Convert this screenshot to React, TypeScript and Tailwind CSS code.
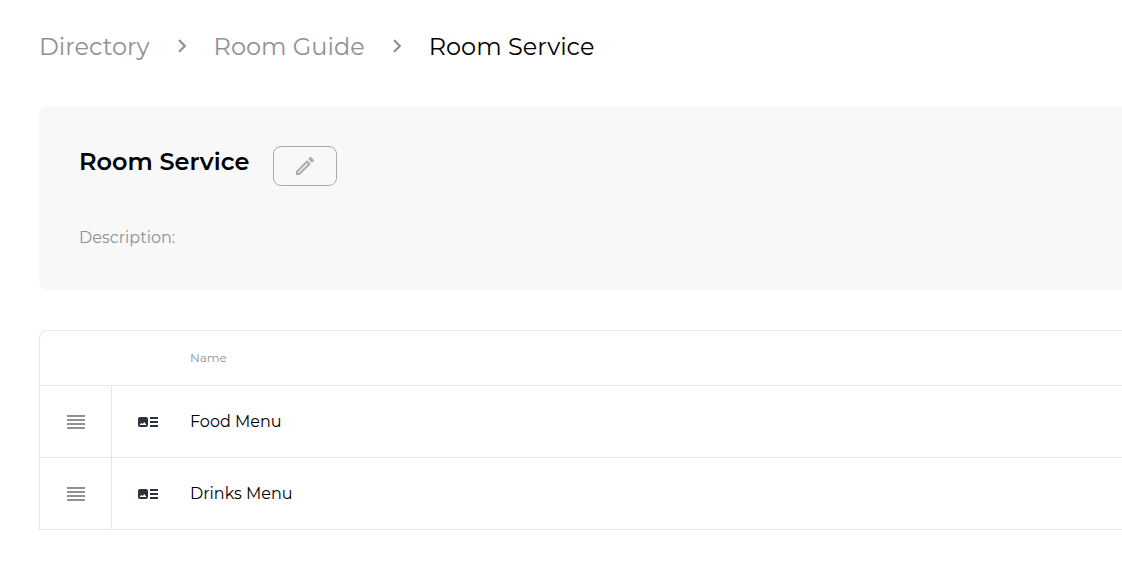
const items = [{ name: 'Food Menu' }, { name: 'Drinks Menu' }];

const Chevron = () => (
    <svg viewBox="1 2 22 22" className="w-6 h-6 shrink-0" fill="currentColor" aria-hidden="true">
        <path d="M10 6L8.59 7.41 13.17 12l-4.58 4.59L10 18l6-6z" />
    </svg>
);

const PencilIcon = () => (
    <svg viewBox="0 0 24 24" className="w-6 h-6" fill="currentColor" aria-hidden="true">
        <path d="M14.06 9.02l.92.92L5.92 19H5v-.92l9.06-9.06M17.66 3c-.25 0-.51.1-.7.29l-1.83 1.83 3.75 3.75 1.83-1.83c.39-.39.39-1.02 0-1.41l-2.34-2.34c-.2-.2-.45-.29-.71-.29zm-3.6 3.19L3 17.25V21h3.75L17.81 9.94l-3.75-3.75z" />
    </svg>
);

const DragIcon = () => (
    <svg viewBox="0 0 24 24" className="w-6 h-6 mx-auto" fill="currentColor" aria-hidden="true">
        <path d="M3 5h18v2H3zM3 9h18v2H3zM3 13h18v2H3zM3 17h18v2H3z" />
    </svg>
);

const ArticleIcon = () => (
    <svg viewBox="0 0 24 24" className="w-6 h-6 mx-auto" fill="currentColor" aria-hidden="true">
        <path d="M22 13h-8v-2h8v2zm0-6h-8v2h8V7zm-8 10h8v-2h-8v2zm-2-8v6c0 1.1-.9 2-2 2H4c-1.1 0-2-.9-2-2V9c0-1.1.9-2 2-2h6c1.1 0 2 .9 2 2zm-1.5 6l-2.25-3-1.75 2.26-1.25-1.51L3.5 15h7z" />
    </svg>
);

const App = () => {
    return (
        <div className="min-h-screen pt-7 pl-10 -ml-px overflow-hidden bg-white text-black font-[Montserrat,Inter,sans-serif]">
            {/* Breadcrumbs */}
            <nav className="flex items-center gap-5 text-2xl leading-[38px] text-[#8e9196]">
                <a href="/">Directory</a>
                <Chevron />
                <a href="/">Room Guide</a>
                <Chevron />
                <span className="text-black">Room Service</span>
            </nav>

            {/* Details */}
            <section className="p-10 mt-10 rounded-l-lg bg-[#f8f8f8]">
                <div className="flex items-start gap-6">
                    <h1 className="text-2xl font-semibold">Room Service</h1>
                    <button
                        aria-label="Edit"
                        className="flex items-center justify-center w-16 h-10 border border-[#a9abae] rounded-lg text-[#a9abae]"
                    >
                        <PencilIcon />
                    </button>
                </div>
                <p className="mt-10 leading-6 text-[#8e9196]">Description:</p>
            </section>

            {/* Items */}
            <table className="w-full mt-10 text-left border-separate border-spacing-0 table-fixed border-t border-l border-[#e7e7e8] rounded-tl-lg">
                <thead>
                    <tr className="h-[55px]">
                        <td className="w-[72px] border-b border-[#e7e7e8]" />
                        <td className="w-[72px] border-b border-[#e7e7e8]" />
                        <th className="pl-[6px] text-xs font-normal text-[#8e9196] border-b border-[#e7e7e8]">Name</th>
                    </tr>
                </thead>
                <tbody>
                    {items.map((item) => (
                        <tr key={item.name} className="h-[72px]">
                            <td className="border-b border-r border-[#e7e7e8] text-[#8e9196]">
                                <DragIcon />
                            </td>
                            <td className="border-b border-[#e7e7e8] text-[#2b323b]">
                                <ArticleIcon />
                            </td>
                            <td className="pl-[6px] border-b border-[#e7e7e8]">{item.name}</td>
                        </tr>
                    ))}
                </tbody>
            </table>
        </div>
    );
};

export default App;
